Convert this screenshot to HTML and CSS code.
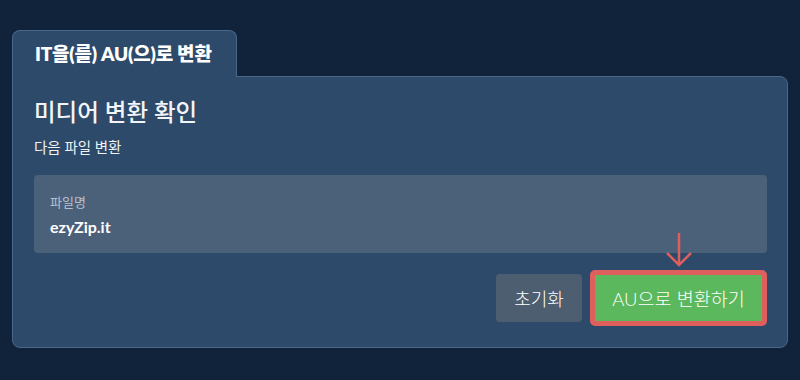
FILE: index.html
```html
<!DOCTYPE html>
<html lang="ko">
<head>
    <meta charset="UTF-8">
    <title>미디어 변환</title>
    <link rel="stylesheet" href="styles.css">
</head>
<body>
    <div class="wrap">
        <div class="tab">IT을(를) AU(으)로 변환</div>
        <div class="panel">
            <h2 class="title">미디어 변환 확인</h2>
            <p class="sub">다음 파일 변환</p>
            <div class="fileBox">
                <div class="label">파일명</div>
                <div class="name">ezyZip.it</div>
            </div>
            <div class="actions">
                <button class="btn reset">초기화</button>
                <div class="convertWrap">
                    <svg class="arrow" width="30" height="36" viewBox="0 0 30 36">
                        <path d="M15 1 V33 M3 21 L15 33 L27 21" fill="none" stroke="#df5f5d" stroke-width="2.5"/>
                    </svg>
                    <button class="btn convert">AU으로 변환하기</button>
                </div>
            </div>
        </div>
    </div>
</body>
</html>
```

FILE: styles.css
```css
* {
    padding: 0;
    margin: 0;
    box-sizing: border-box;
}

body {
    background-color: #11233a;
    font-family: "Lato", "Noto Sans CJK KR", sans-serif;
    color: #fff;
}

.wrap {
    padding: 30px 12px 0;
    width: 800px;
}

.tab {
    position: relative;
    z-index: 1;
    display: inline-block;
    width: 225px;
    height: 47px;
    margin-bottom: -1px;
    padding: 0 0 0 22px;
    line-height: 46px;
    font-size: 19px;
    font-weight: 800;
    letter-spacing: -0.2px;
    background-color: #2d4a6a;
    border: 1px solid #4b6787;
    border-bottom: none;
    border-radius: 8px 8px 0 0;
}

.panel {
    height: 272px;
    padding: 20px 20px 0 21px;
    background-color: #2d4a6a;
    border: 1px solid #4b6787;
    border-radius: 0 8px 8px 8px;
}

.title {
    font-size: 23.5px;
    font-weight: 500;
    line-height: 30px;
    color: #f2f4f7;
}

.sub {
    margin-top: 11px;
    font-size: 14.5px;
    line-height: 20px;
    color: #f0f2f5;
}

.fileBox {
    margin-top: 17px;
    height: 78px;
    padding: 18px 16px 0;
    background-color: #4b6079;
    border-radius: 4px;
}

.label {
    font-size: 13px;
    line-height: 18px;
    color: #b6c0cc;
}

.name {
    margin-top: 6px;
    font-size: 16px;
    font-weight: 700;
    line-height: 20px;
}

.actions {
    display: flex;
    justify-content: flex-end;
    align-items: center;
    gap: 8px;
    margin-top: 17px;
}

.btn {
    font-family: "Lato", "Noto Sans CJK KR", sans-serif;
    font-weight: 300;
    font-size: 18px;
    color: #fff;
    border: none;
    border-radius: 4px;
    cursor: pointer;
}

.btn.reset {
    width: 86px;
    height: 48px;
    background-color: #4d5e70;
}

.convertWrap {
    position: relative;
}

.btn.convert {
    display: block;
    width: 177px;
    height: 56px;
    background-color: #5cb85c;
    border: 5px solid #df5f5d;
    border-radius: 5px;
    font-size: 18.5px;
}

.arrow {
    position: absolute;
    left: 74px;
    top: -38px;
}
```
